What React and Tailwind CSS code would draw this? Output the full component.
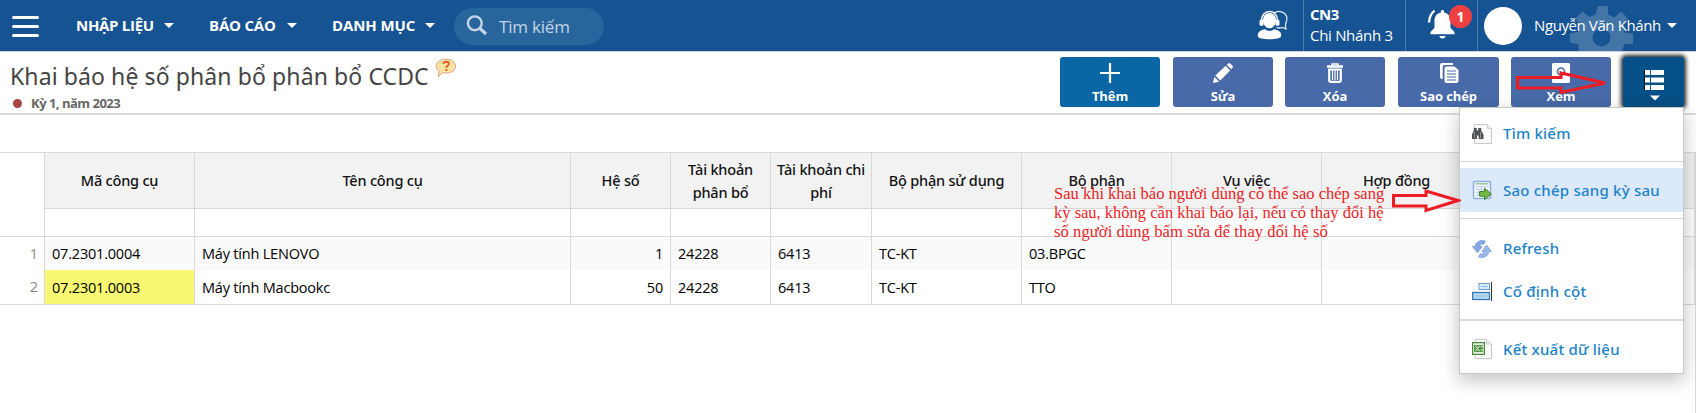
import React from "react";

const Caret = ({ className = "" }) => (
  <svg viewBox="0 0 10 5" className={`h-[5px] w-[10px] shrink-0 ${className}`} fill="#fff">
    <path d="M0 0h10L5 5z" />
  </svg>
);

const HelpBubble = () => (
  <svg viewBox="0 0 22 20" className="h-5 w-[22px]">
    <path d="M11 1.2c5.6 0 9.6 2.8 9.6 6.9S16.600 15 11 15c-1.200 0-2.400-.1-3.500-.4L3.200 18.800l.9-5.300C2.300 12.200 1.200 10.400 1.200 8.100c0-4.100 4.200-6.900 9.800-6.900z" fill="#fde3a0" stroke="#dda585" strokeWidth="1" />
    <path d="M8.400 5.900c.2-1.500 1.300-2.100 2.700-2.100 1.700 0 2.700.9 2.700 2.100 0 1.900-2.400 1.800-2.400 3.900" fill="none" stroke="#df5a2f" strokeWidth="1.900" />
    <path d="M10.400 11h2v2h-2z" fill="#df5a2f" />
  </svg>
);

const SearchIcon = () => (
  <svg viewBox="0 0 22 22" className="h-[22px] w-[22px]" fill="none" stroke="#c3d5e6">
    <circle cx="8.800" cy="9.300" r="6.900" strokeWidth="2.400" />
    <path d="M14 14.500l6 5.500" strokeWidth="3.200" />
  </svg>
);

const Support = () => (
  <svg viewBox="0 0 32 32" className="h-8 w-8">
    <path d="M17 4c2-1.600 5-2 7.500-1.200 4.500 1.400 6.500 5.500 5 9.700-.6 1.700-1.300 2.600-1 4.500l.5 3-3.500-1.500c-2.500.8-4.500.6-6-.3" fill="none" stroke="#e4edf6" strokeWidth="1.300" />
    <path d="M4.500 13v-2C4.500 6 8 2.600 12.500 2.600S20.500 6 20.500 11v2" fill="none" stroke="#fff" strokeWidth="1.500" />
    <path d="M6 11c0-4 2.500-7 6.500-7s6.500 3 6.500 7c0 4.500-2.800 8.300-6.500 8.300S6 15.500 6 11z" fill="#fff" />
    <rect x="2.500" y="10.500" width="4" height="6.500" rx="1.800" fill="#fff" />
    <rect x="18.500" y="10.500" width="4" height="6.500" rx="1.800" fill="#fff" />
    <path d="M20.500 16.500c-1 2-3.500 3-6 3" stroke="#165392" strokeWidth="1" fill="none" />
    <path d="M1 27.500c-1-4 2.500-6.500 7-7.200 2.800 2.200 6.400 2.200 9 0 4.800.7 8.200 3.200 7 7.200-.3 1.800-5.700 2.700-11.500 2.700S1.300 29.300 1 27.500z" fill="#fff" />
  </svg>
);

const Bell = () => (
  <svg viewBox="0 0 30 32" className="h-8 w-[30px]" fill="#fff">
    <path d="M16.500 2c.9 0 1.600.7 1.600 1.600v.8c3.900.8 6.400 3.900 6.400 8.100v7.300l4 4.200v2.200H4.500V24l4-4.200v-7.300c0-4.200 2.500-7.300 6.400-8.100v-.8c0-.9.700-1.600 1.600-1.600z" />
    <path d="M13.300 28h6.400c-.3 1.500-1.600 2.600-3.200 2.600s-2.900-1.100-3.200-2.600z" />
    <path d="M3 14.500C3.300 9.500 5 5.500 8.600 2.700" fill="none" stroke="#fff" strokeWidth="2.300" />
  </svg>
);

const Gear = () => (
  <svg viewBox="0 0 64 45" className="h-[45px] w-16" fill="#fff" fillOpacity=".2">
    <path fillRule="evenodd" d="M28 0h10v8.500l6.500 3L51 5.500l7 7-6 7 2.500 7 8.500 1v10.500h-8.500L52 45H8l1-1.500L8 38 0 36.500v-9L8 26l2.500-6-5-7.500 7-7L19.500 11l6-2.500zM31.500 22.500a9 9 0 100 18 9 9 0 000-18z" />
  </svg>
);

const Plus = () => (
  <svg viewBox="0 0 20 20" className="h-5 w-5" stroke="#fff" strokeWidth="2.200"><path d="M10 0v20M0 10h20" /></svg>
);
const Pencil = () => (
  <svg viewBox="0 0 20 20" className="h-5 w-5" fill="#fff">
    <path d="M0 20l1.300-6.200 4.900 4.900zM2.300 12.600L12.700 2.800l4.500 4.600L7.300 17.600zM13.800 1.800L15.300.5c.6-.5 1.300-.5 1.900 0L19.500 2.800c.6.600.6 1.300 0 1.900L18.200 6.200z" />
  </svg>
);
const Trash = () => (
  <svg viewBox="0 0 16 20" className="h-5 w-4" fill="none" stroke="#fff">
    <path d="M5 2.500V1h6v1.500" strokeWidth="1.500" />
    <path d="M0 3.500h16" strokeWidth="2.500" />
    <path d="M2.200 6.500V17.500q0 1.300 1.300 1.300h9q1.300 0 1.300-1.300V6.500z" strokeWidth="2.200" />
    <path d="M5.500 7v10M8 7v10M10.500 7v10" strokeWidth="1.200" />
  </svg>
);
const Copy = () => (
  <svg viewBox="0 0 20 20" className="h-5 w-5">
    <path d="M14 0v2H6Q3.700 2 3.700 4v12H3q-2 0-2-2V2Q1 0 3 0z" fill="#fff" />
    <path d="M7.500 3.500h8L19.500 7v11q0 2-2 2h-10q-2 0-2-2V5.500q0-2 2-2z" fill="#fff" />
    <path d="M8 8h9M8 11h9M8 14h9M8 17h9" stroke="#486aa8" strokeWidth="1.200" />
  </svg>
);
const View = () => (
  <svg viewBox="0 0 18 20" className="h-5 w-[18px]">
    <rect width="18" height="20" rx="1.500" fill="#fff" />
    <circle cx="9" cy="8.500" r="3.500" fill="none" stroke="#486aa8" strokeWidth="1.600" />
  </svg>
);
const ListIcon = () => (
  <svg viewBox="0 0 20 32" className="mt-[13px] h-8 w-5" fill="#fff">
    <path d="M1 0h5v5H1zM7 0H20v5H7zM1 7.500h5v5H1zM7 7.500H20v5H7zM1 15h5v5H1zM7 15H20v5H7z" />
    <path d="M0 0h1v20H0z" fill="#111" />
    <path d="M6 25.500h10l-5 5z" />
  </svg>
);

const Binoculars = () => (
  <svg viewBox="0 0 20 20" className="h-5 w-5">
    <path d="M2.500.5h13l4 4v15h-17z" fill="#fafafa" stroke="#c9c9c9" />
    <path d="M15.500.5v4h4" fill="#eee" stroke="#cfcfcf" />
    <path d="M0 10.500L1.800 6.500V4h2.900v2.500h1.600V4h2.900v2.500l2.300 4V15H6.700v-3.500H5V15H0z" fill="#4d5258" />
    <path d="M2.600 8v6M8.600 8v6" stroke="#90979e" />
  </svg>
);
const SheetArrow = () => (
  <svg viewBox="0 0 20 20" className="h-5 w-5">
    <rect x="1.500" y="1.500" width="17" height="17" rx="1" fill="#f4f8fd" stroke="#8fb0dc" strokeWidth="1.500" />
    <path d="M3.500 3.800h13" stroke="#9bc79c" strokeWidth="1.500" />
    <path d="M3.500 6.500h13M3.500 9.500h13M3.500 12.500h13M3.500 15.500h13M6 6v10M9.500 6v10M13 6v10" stroke="#b5cbe8" strokeWidth=".8" />
    <path d="M7.500 11.500h5V8.300l6.900 5.700-6.900 5.500v-3.300h-5z" fill="#73b844" stroke="#3f8527" />
  </svg>
);
const RefreshIcon = () => (
  <svg viewBox="0 0 20 18" className="h-[18px] w-5">
    <path d="M13.500 1C8.500-.8 3.600 1.600 3 6.500H.3L5.500 13l4.700-6.500H7.700c.5-2 2.300-3 4.300-2.300z" fill="#86a9e4" stroke="#6b91d2" strokeWidth=".6" />
    <path d="M6.500 17c5 1.800 9.900-.6 10.500-5.500h2.700L14.500 5l-4.700 6.500h2.500c-.5 2-2.300 3-4.300 2.300z" fill="#9ab8ec" stroke="#6b91d2" strokeWidth=".6" />
  </svg>
);
const FreezeIcon = () => (
  <svg viewBox="0 0 20 20" className="h-5 w-5">
    <rect x="7" y="1.500" width="10.500" height="6" fill="#d8ebfa" stroke="#6d9fce" />
    <rect x=".7" y="10.500" width="16.800" height="7" fill="#b5dcf5" stroke="#3577b5" strokeWidth="1.300" />
    <path d="M9 4.500h7M3 14h12" stroke="#8bbce3" />
    <path d="M19.500 0v19" stroke="#333" />
  </svg>
);
const ExcelIcon = () => (
  <svg viewBox="0 0 20 20" className="h-5 w-5">
    <path d="M3 .5h11.500l5 4.500v14.500H3z" fill="#fafafa" stroke="#c9c9c9" />
    <path d="M14.500.5V5h5" fill="#eee" stroke="#cfcfcf" />
    <rect x=".6" y="3.600" width="11.800" height="11.800" fill="#e6f2df" stroke="#48893a" strokeWidth="1.200" />
    <path d="M2 6h9v7H2z" fill="#5a9a4a" />
    <path d="M3.500 7l4 5M7.500 7l-4 5M9 7.500h2M9 11h2" stroke="#e6f2df" />
  </svg>
);

const NAV = [
  { label: "NHẬP LIỆU", box: "w-[133px]", text: "w-[88px] tracking-[-0.3px]" },
  { label: "BÁO CÁO", box: "w-[123px]", text: "w-[78px] tracking-[-0.2px]" },
  { label: "DANH MỤC", box: "w-[122px]", text: "w-[93px] tracking-[-0.1px]" },
];

const ACTIONS = [
  { label: "Thêm", Icon: Plus, cls: "ml-0 w-[100px] bg-[#0a66a5]" },
  { label: "Sửa", Icon: Pencil, cls: "ml-[13px] w-[100px] bg-[#486aa8]" },
  { label: "Xóa", Icon: Trash, cls: "ml-3 w-[100px] bg-[#486aa8]" },
  { label: "Sao chép", Icon: Copy, cls: "ml-[13px] w-[101px] bg-[#486aa8]" },
  { label: "Xem", Icon: View, cls: "ml-3 w-[100px] bg-[#486aa8]" },
];

const HEADERS = [
  "Mã công cụ",
  "Tên công cụ",
  "Hệ số",
  "Tài khoản phân bổ",
  "Tài khoản chi phí",
  "Bộ phận sử dụng",
  "Bộ phận",
  "Vụ việc",
  "Hợp đồng",
  "",
];

const ROWS = [
  ["07.2301.0004", "Máy tính LENOVO", "1", "24228", "6413", "TC-KT", "03.BPGC", "", "", ""],
  ["07.2301.0003", "Máy tính Macbookc", "50", "24228", "6413", "TC-KT", "TTO", "", "", ""],
];

const COLS = "grid grid-cols-[150px_376px_100px_100px_101px_150px_150px_150px_150px_1fr]";

const MenuItem = ({ Icon, label, className }) => (
  <div className={`flex items-center pl-3 ${className}`}>
    <span className="flex w-[31px] items-center"><Icon /></span>
    <span className="font-['Noto_Sans',sans-serif] text-[15px] font-medium tracking-[0.22px] text-[#1c82c8]">{label}</span>
  </div>
);

export default function App() {
  return (
    <div className="relative h-[413px] w-[1696px] overflow-hidden bg-white font-['Open_Sans','Noto_Sans',sans-serif] text-[#111]">
      <header className="flex h-[52px] border-b border-[#c9d3df] bg-[#165392] text-white">
        <div className="flex w-[76px] flex-col gap-[6px] pt-4 pl-3">
          <span className="h-[3px] w-[27px] rounded-full bg-white" />
          <span className="h-[3px] w-[27px] rounded-full bg-white" />
          <span className="h-[3px] w-[27px] rounded-full bg-white" />
        </div>
        {NAV.map((n) => (
          <div key={n.label} className={`flex items-center ${n.box}`}>
            <span className={`shrink-0 text-[15px] font-bold whitespace-nowrap ${n.text}`}>{n.label}</span>
            <Caret />
          </div>
        ))}
        <div className="mt-2 flex h-[37px] w-[150px] items-center rounded-full bg-[#29659d] pl-3 text-[#c3d5e6]">
          <span className="mb-1 w-[33px]"><SearchIcon /></span>
          <span className="text-[17px] tracking-[-0.2px]">Tìm kiếm</span>
        </div>
        <div className="ml-auto flex h-[51px]">
          <div className="w-[46px] pt-[9px]"><Support /></div>
          <div className="w-[102px] border-l border-[#4c7cac] pt-1 pl-[6px] text-[15px] leading-[21px]">
            <div className="font-bold tracking-[-0.5px]">CN3</div>
            <div className="tracking-[-0.3px]">Chi Nhánh 3</div>
          </div>
          <div className="relative w-[72px] border-l border-[#4c7cac] pt-2 pl-5">
            <Bell />
            <span className="absolute top-[5px] left-[43px] flex size-[23px] items-center justify-center rounded-full bg-[#ee4040] text-[14px] font-bold">1</span>
          </div>
          <div className="relative flex w-[219px] items-center border-l border-[#4c7cac] pl-[6px]">
            <span className="size-[38px] rounded-full bg-white" />
            <div className="absolute top-[6px] left-[92px]"><Gear /></div>
            <span className="relative ml-3 w-[133px] pb-px text-[15px] tracking-[-0.4px] whitespace-nowrap">Nguyễn Văn Khánh</span>
            <Caret className="relative" />
          </div>
        </div>
      </header>

      <section className="flex h-[63px] border-b-2 border-[#dcdcdc]">
        <div className="w-[1060px] pl-[10px]">
          <div className="flex h-[42px] items-start">
            <h1 className="w-[425px] pt-[7px] font-['Noto_Sans',sans-serif] text-[23px] leading-[34px] tracking-[0.1px] whitespace-nowrap text-[#444]">Khai báo hệ số phân bổ phân bổ CCDC</h1>
            <span className="pt-[6px]"><HelpBubble /></span>
          </div>
          <div className="flex items-center">
            <span className="ml-[3px] size-[9px] rounded-full bg-[#ac4343]" />
            <span className="ml-[9px] text-[13px] leading-[18px] font-bold tracking-[-0.5px] text-[#666]">Kỳ 1, năm 2023</span>
          </div>
        </div>
        <div className="flex pt-[5px]">
          {ACTIONS.map(({ label, Icon, cls }) => (
            <div key={label} className={`flex h-[50px] flex-col items-center rounded-[3px] pt-[6px] text-[13px] leading-[18px] font-bold tracking-[-0.1px] text-white ${cls}`}>
              <Icon />
              <span className="mt-1">{label}</span>
            </div>
          ))}
          <div className="ml-3 flex h-[50px] w-[61px] justify-center rounded-[3px] bg-[#055087] shadow-[0_0_4px_2px_#222]">
            <ListIcon />
          </div>
        </div>
      </section>

      <main className="mt-[37px] flex h-[261px] flex-col border-r border-t border-[#d9d9d9]">
        <div className="flex h-[84px] border-b border-[#d9d9d9]">
          <div className="w-[45px] border-r border-[#d9d9d9]" />
          <div className="flex-1">
            <div className={`h-[56px] border-b border-[#d9d9d9] bg-[#f2f2f2] ${COLS}`}>
              {HEADERS.map((h, i) => (
                <div key={i} className="flex items-center justify-center border-r border-[#d9d9d9] px-1 text-center font-['Noto_Sans',sans-serif] text-[14.500px] leading-[23px] font-medium tracking-[-0.2px] text-[#111]">{h}</div>
              ))}
            </div>
            <div className={`h-[27px] ${COLS}`}>
              {HEADERS.map((h, i) => (
                <div key={i} className="border-r border-[#d9d9d9]" />
              ))}
            </div>
          </div>
        </div>
        {ROWS.map((row, r) => (
          <div key={r} className={`flex text-[14.500px] ${r === 0 ? "h-[33px]" : "h-[35px] border-b border-[#d9d9d9]"}`}>
            <div className="flex w-[45px] items-center justify-end border-r border-[#d9d9d9] pr-[6px] text-[#8a8a8a]">{r + 1}</div>
            <div className={`flex-1 ${COLS} ${r === 0 ? "bg-[#fafafa]" : ""}`}>
              {row.map((c, i) => (
                <div key={i} className={`flex items-center border-r border-[#d9d9d9] px-[7px] tracking-[-0.2px] whitespace-nowrap text-black ${i === 2 ? "justify-end" : ""} ${r === 1 ? "pt-px" : ""} ${r === 1 && i === 0 ? "bg-[#f8f872]" : ""}`}>{c}</div>
              ))}
            </div>
          </div>
        ))}
      </main>

      <p className="absolute top-[184px] left-[1054px] w-[345px] font-['Liberation_Serif',serif] text-[16.500px] leading-[19px] whitespace-nowrap text-[#ed1c24]">
        Sau khi khai báo người dùng có thể sao chép sang<br />
        kỳ sau, không cần khai báo lại, nếu có thay đổi hệ<br />
        <span className="tracking-[0.1px]">số người dùng bấm sửa để thay đổi hệ số</span>
      </p>

      <div className="absolute top-[107px] left-[1459px] h-[267px] w-[225px] border border-[#c8c8c8] bg-white shadow-[0_6px_18px_rgba(0,0,0,0.25)]">
        <MenuItem Icon={Binoculars} label="Tìm kiếm" className="h-[51px]" />
        <div className="mt-[2px] h-px bg-[#d6d6d6]" />
        <MenuItem Icon={SheetArrow} label="Sao chép sang kỳ sau" className="my-[6px] h-11 bg-[#dbe9fa]" />
        <div className="h-px bg-[#d6d6d6]" />
        <MenuItem Icon={RefreshIcon} label="Refresh" className="mt-2 h-[43px]" />
        <MenuItem Icon={FreezeIcon} label="Cố định cột" className="h-[43px]" />
        <div className="mt-[6px] h-[2px] bg-[#dadada]" />
        <MenuItem Icon={ExcelIcon} label="Kết xuất dữ liệu" className="mt-[5px] h-[46px]" />
      </div>

      <svg viewBox="0 0 94 24" className="absolute top-[71px] left-[1514px] h-6 w-[94px]" fill="none" stroke="#ed1c24" strokeWidth="3">
        <path d="M3.500 6.500H47V2L91 12 47 21.500V17H3.500z" />
      </svg>
      <svg viewBox="0 0 70 24" className="absolute top-[189px] left-[1391px] h-6 w-[70px]" fill="none" stroke="#ed1c24" strokeWidth="3">
        <path d="M2.500 6.500H35V2L67 11.500 35 21.500V17H2.500z" />
      </svg>
    </div>
  );
}
